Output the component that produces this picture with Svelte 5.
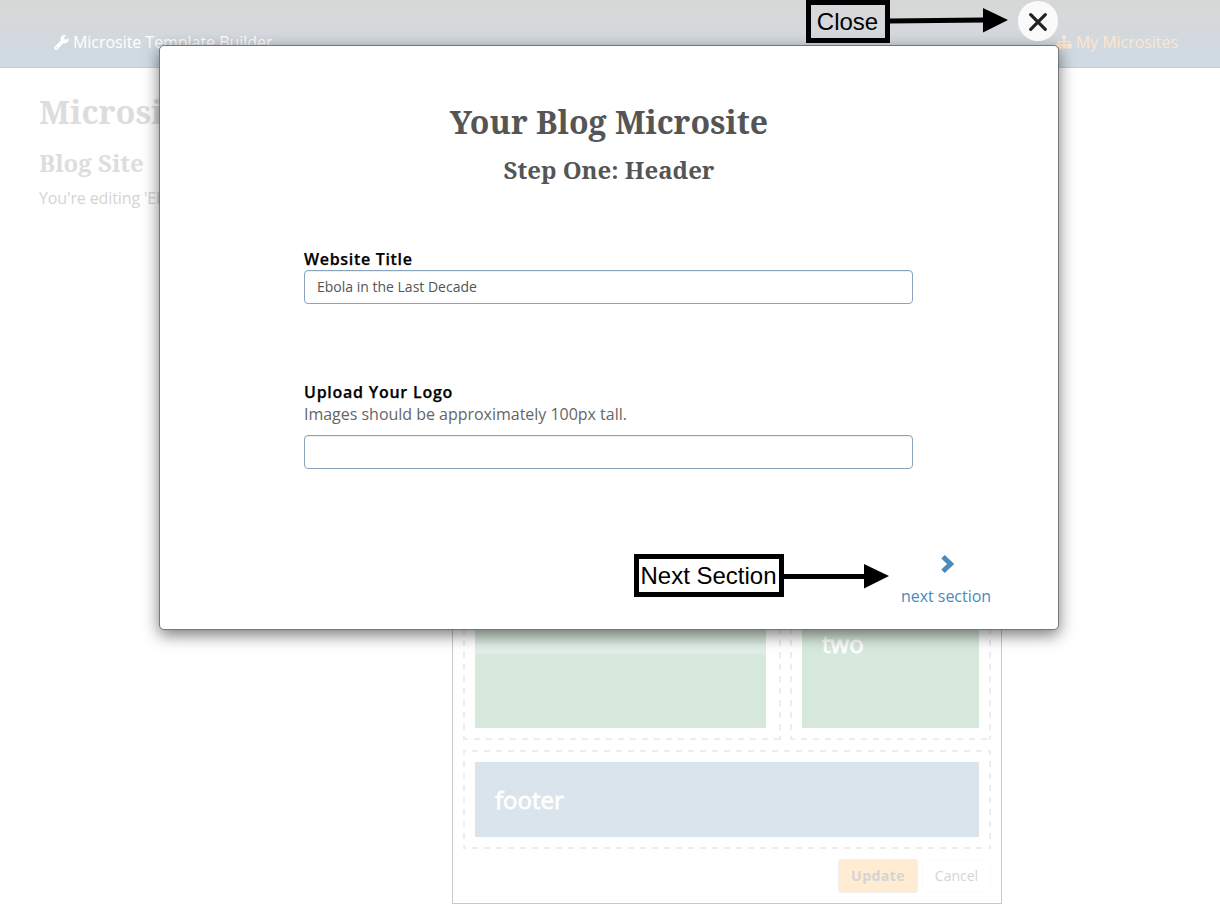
<script lang="ts">
  let siteTitle = $state('Ebola in the Last Decade');
  let logo = $state('');
</script>

<div class="page">
  <header>
    <div class="brand">
      <svg width="15" height="15" viewBox="0 0 15 15"><path fill="#fff" d="M14.4 3.2 12 4.7 10.2 3.7V2L12.5.5C12 .2 11.3 0 10.6 0 8.200 0 6.400 1.900 6.400 4.200c0 .6.1 1 .3 1.500L.7 11.600c-.9.900-.9 1.500-.2 2.300l.6.6c.7.7 1.500.7 2.300-.1l5.900-6.100c.4.2.9.2 1.300.2 2.300 0 4.200-1.900 4.200-4.200 0-.4-.1-.8-.4-1.100ZM2.400 13.500a.7.7 0 1 1 0-1.400.7.7 0 0 1 0 1.400Z"/></svg>
      <span>Microsite Template Builder</span>
    </div>
    <div class="mine">
      <svg width="16" height="14" viewBox="0 0 16 14"><path fill="#fde7cb" d="M6 0h4v4H8.700v2H14v3h2v4.500h-5V9h1.700V7.300H8.700V9h1.800v4.500h-5V9h1.800V7.300H3.300V9H5v4.500H0V9h2V6h5.300V4H6Z"/></svg>
      <span>My Microsites</span>
    </div>
  </header>

  <main>
    <h1>Microsite</h1>
    <h2>Blog Site</h2>
    <p>You're editing 'Ebola in the Last Decade'</p>
  </main>

  <section class="layout-card">
    <div class="columns">
      <div class="zone one"><div class="block"><div class="band"></div></div></div>
      <div class="zone two"><div class="block">two</div></div>
    </div>
    <div class="zone foot"><div class="block">footer</div></div>
    <div class="actions">
      <button class="update">Update</button>
      <button class="cancel">Cancel</button>
    </div>
  </section>
</div>

<div class="modal">
  <h1>Your Blog Microsite</h1>
  <h2>Step One: Header</h2>
  <div class="form">
    <label for="title">Website Title</label>
    <input id="title" bind:value={siteTitle} />
    <label class="second" for="logo">Upload Your Logo</label>
    <p>Images should be approximately 100px tall.</p>
    <input id="logo" bind:value={logo} />
  </div>
  <div class="next">
    <svg width="14" height="18" viewBox="0 0 14 18"><path d="M2 1.800 9.600 9 2 16.200" fill="none" stroke="#4b8ab9" stroke-width="5"/></svg>
    <span>next section</span>
  </div>
</div>

<div class="close">
  <svg width="18" height="18" viewBox="0 0 18 18"><path d="M1.700 1.700 16.300 16.300M16.300 1.700 1.700 16.300" stroke="#222" stroke-width="3.200" stroke-linecap="round"/></svg>
</div>

<div class="note note-close"><span>Close</span></div>
<svg class="arrow arrow-close" width="119" height="26" viewBox="0 0 119 26"><path d="M0 14 94 13" stroke="#000" stroke-width="5"/><path d="M93 1 118 13 93 25.500Z"/></svg>
<div class="note note-next"><span>Next Section</span></div>
<svg class="arrow arrow-next" width="106" height="26" viewBox="0 0 106 26"><path d="M0 13.500H82" stroke="#000" stroke-width="5"/><path d="M80 1 105 13 80 25.500Z"/></svg>

<style>
  :global(body) { margin: 0; overflow: hidden; background: #fff; }
  * { box-sizing: border-box; }
  .page { height: 915px; overflow: hidden; font: 16px/22px "Open Sans", sans-serif; position: relative; display: flex; flex-direction: column; }
  header { height: 68px; flex: none; padding: 17px 42px 0 54px; display: flex; justify-content: space-between; align-items: center; color: #fff; background: linear-gradient(#d7d7d7, #d5d8db 40%, #cfdae3 85%, #cfdbe4); border-bottom: 1px solid #c9cdd1; }
  .brand, .mine { display: flex; align-items: center; gap: 4px; }
  .brand span { letter-spacing: -.04px; }
  .mine { color: #fde7cb; }
  .mine span { letter-spacing: -.04px; }
  h1, h2 { font-family: "Droid Serif", "Noto Serif", "DejaVu Serif Condensed", "DejaVu Serif", serif; font-weight: bold; margin: 0; white-space: nowrap; }
  h1 { font-size: 32px; line-height: 40px; }
  h2 { font-size: 24px; line-height: 30px; }
  main { height: 520px; flex: none; padding: 24px 39px; color: #ddd; }
  main h1 { font-size: 32.5px; }
  main h2 { margin-top: 16px; }
  main p { margin: 9px 0 0; color: #d4d4d4; letter-spacing: -.12px; }
  .layout-card { margin-left: 452px; width: 550px; height: 316px; flex: none; border: 1px solid #c9c9c9; border-top: 0; padding: 0 10px; display: flex; flex-direction: column; }
  .columns { height: 152px; display: flex; gap: 9px; }
  .zone {
    --x: repeating-linear-gradient(90deg, #ededed 0 6px, transparent 6px 12px);
    --y: repeating-linear-gradient(180deg, #ededed 0 6px, transparent 6px 12px);
    padding: 12px;
    background: var(--y) 0 100% / 2px 148px no-repeat, var(--y) 100% 100% / 2px 148px no-repeat, var(--x) -1px 100% / calc(100% + 1px) 2px no-repeat;
  }
  .one { width: 318px; padding: 10px 15px 12px 12px; }
  .two { width: 201px; padding-top: 10px; }
  .foot { margin-top: 10px; width: 528px; height: 99px; background: var(--y) 0 -1px / 2px calc(100% + 1px) no-repeat, var(--y) 100% -1px / 2px calc(100% + 1px) no-repeat, var(--x) -3px 0 / calc(100% + 3px) 2px no-repeat, var(--x) -3px 100% / calc(100% + 3px) 2px no-repeat; }
  .block { height: 100%; background: #d7e9dd; color: #fff; font-size: 24px; line-height: 34px; padding: 29px 20px; -webkit-text-stroke: .8px #fff; }
  .one .block { padding: 46px 0 0; }
  .band { height: 10px; background: #e0eee5; }
  .foot .block { background: #dae4ec; padding-top: 21px; }
  .actions { display: flex; justify-content: flex-end; gap: 4px; padding: 10px 0 0 0; }
  button { height: 34px; border-radius: 4px; font: 14px/20px "Open Sans", sans-serif; padding: 0; color: #d4d4d4; background: #fff; border: 1px solid #fafafa; }
  .update { width: 80px; font-weight: bold; letter-spacing: .45px; background: #ffecd2; border-color: #eee; }
  .cancel { width: 69px; }
  .modal { position: absolute; left: 159px; top: 45px; width: 900px; height: 585px; background: #fff; border: 1px solid #777; border-radius: 5px; box-shadow: 0 5px 16px rgba(0,0,0,.53); padding-top: 56px; font: 16px/22px "Open Sans", sans-serif; color: #555; }
  .modal h1, .modal h2 { text-align: center; }
  .modal h1 { font-size: 32.1px; }
  .modal h2 { margin-top: 13px; }
  .form { width: 609px; margin: 63px 0 0 144px; display: flex; flex-direction: column; }
  label { color: #000; font-weight: 600; letter-spacing: .68px; line-height: 22px; font-kerning: none; -webkit-text-stroke: .25px #000; }
  .second { margin-top: 77px; letter-spacing: .75px; }
  .form p { margin: 0 0 10px; line-height: 22px; color: #666; letter-spacing: -.02px; }
  input { height: 34px; width: 609px; border: 1px solid #8ba4bd; border-radius: 4px; padding: 0 12px 2px; font: 14px "Open Sans", sans-serif; color: #555; box-shadow: inset 0 1px 1px rgba(0,0,0,.075); }
  .next { width: 92px; margin: 86px 0 0 740px; display: flex; flex-direction: column; align-items: center; gap: 12px; color: #4b8ab9; white-space: nowrap; }
  .next svg { margin-left: 4px; }
  .next span { letter-spacing: -.04px; }
  .close { position: absolute; left: 1018px; top: 1px; width: 40px; height: 40px; border-radius: 50%; background: #fafafa; display: grid; place-items: center; padding-top: 1px; }
  .note { position: absolute; border: 5px solid #000; height: 43px; display: flex; align-items: center; justify-content: center; white-space: nowrap; font: 24px "Liberation Sans", sans-serif; color: #000; padding-right: 1px; }
  .note-close { left: 806px; top: 0; width: 84px; }
  .note-next { left: 634px; top: 554px; width: 150px; }
  .arrow { position: absolute; }
  .arrow-close { left: 890px; top: 7px; }
  .arrow-next { left: 784px; top: 563px; }
</style>
